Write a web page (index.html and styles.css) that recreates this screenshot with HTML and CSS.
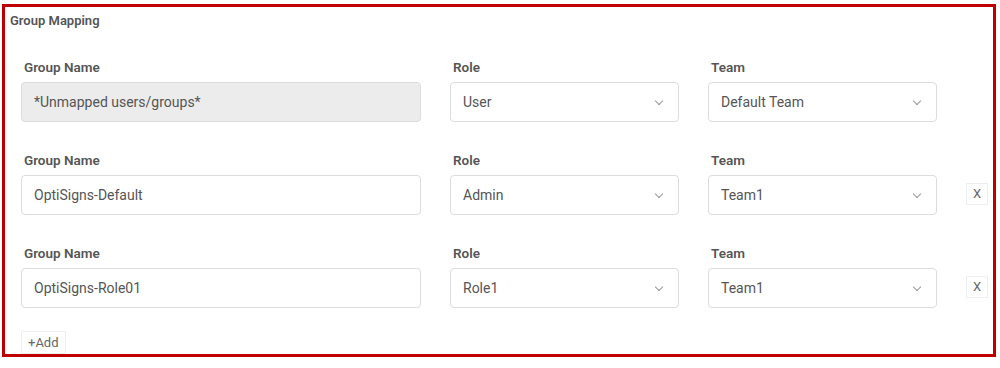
FILE: index.html
```html
<!DOCTYPE html>
<html lang="en">
<head>
  <meta charset="UTF-8" />
  <title>Group Mapping</title>
  <link rel="stylesheet" href="styles.css">
</head>
<body>
  <div class="mapping-box">
    <div class="mapping-title">Group Mapping</div>

    <div class="mapping-row">
      <div class="field">
        <label>Group Name</label>
        <div class="input disabled">*Unmapped users/groups*</div>
      </div>
      <div class="field">
        <label>Role</label>
        <div class="input select">User<span class="chevron"></span></div>
      </div>
      <div class="field">
        <label>Team</label>
        <div class="input select">Default Team<span class="chevron"></span></div>
      </div>
      <div class="remove-slot"></div>
    </div>

    <div class="mapping-row">
      <div class="field">
        <label>Group Name</label>
        <div class="input">OptiSigns-Default</div>
      </div>
      <div class="field">
        <label>Role</label>
        <div class="input select">Admin<span class="chevron"></span></div>
      </div>
      <div class="field">
        <label>Team</label>
        <div class="input select">Team1<span class="chevron"></span></div>
      </div>
      <div class="remove-slot"><button class="remove-btn">X</button></div>
    </div>

    <div class="mapping-row">
      <div class="field">
        <label>Group Name</label>
        <div class="input">OptiSigns-Role01</div>
      </div>
      <div class="field">
        <label>Role</label>
        <div class="input select">Role1<span class="chevron"></span></div>
      </div>
      <div class="field">
        <label>Team</label>
        <div class="input select">Team1<span class="chevron"></span></div>
      </div>
      <div class="remove-slot"><button class="remove-btn">X</button></div>
    </div>

    <button class="add-btn">+Add</button>
  </div>
</body>
</html>
```

FILE: styles.css
```css
* {
  box-sizing: border-box;
  margin: 0;
  padding: 0;
  font-family: Roboto, 'Liberation Sans', Arial, sans-serif;
}

body {
  background: white;
}

.mapping-box {
  margin: 4px 0 0 2px;
  width: 994px;
  height: 353px;
  border: 3px solid #c00000;
  padding: 6px 0 0 5px;
}

.mapping-title {
  font-size: 13px;
  font-weight: 600;
  color: #555;
  line-height: 16px;
}

.mapping-row {
  display: grid;
  grid-template-columns: 400px 229px 229px 22px;
  column-gap: 29px;
  padding-left: 11px;
  margin-top: 30px;
}

.mapping-row + .mapping-row {
  margin-top: 30px;
}

.field label {
  display: block;
  font-size: 13.5px;
  font-weight: 600;
  color: #555;
  line-height: 16px;
  margin-bottom: 7px;
  padding-left: 3px;
}

.input {
  height: 40px;
  border: 1px solid #dcdcdc;
  border-radius: 4px;
  padding: 0 12px;
  font-size: 14px;
  color: #555;
  display: flex;
  align-items: center;
  background: white;
}

.input.disabled {
  background: #ececec;
}

.select {
  justify-content: space-between;
}

.chevron {
  width: 6px;
  height: 6px;
  border-right: 1.5px solid #999;
  border-bottom: 1.5px solid #999;
  transform: rotate(45deg);
  margin: -3px 4px 0 0;
}

.remove-slot {
  display: flex;
  align-items: center;
  padding-top: 23px;
}

.remove-btn {
  width: 22px;
  height: 22px;
  border: 1px solid #eee;
  background: white;
  color: #666;
  font-size: 13px;
  cursor: pointer;
  margin-top: -3px;
}

.add-btn {
  display: block;
  margin: 23px 0 0 11px;
  height: 23px;
  padding: 0 6px;
  border: 1px solid #eee;
  background: white;
  color: #666;
  font-size: 13px;
  cursor: pointer;
}
```
